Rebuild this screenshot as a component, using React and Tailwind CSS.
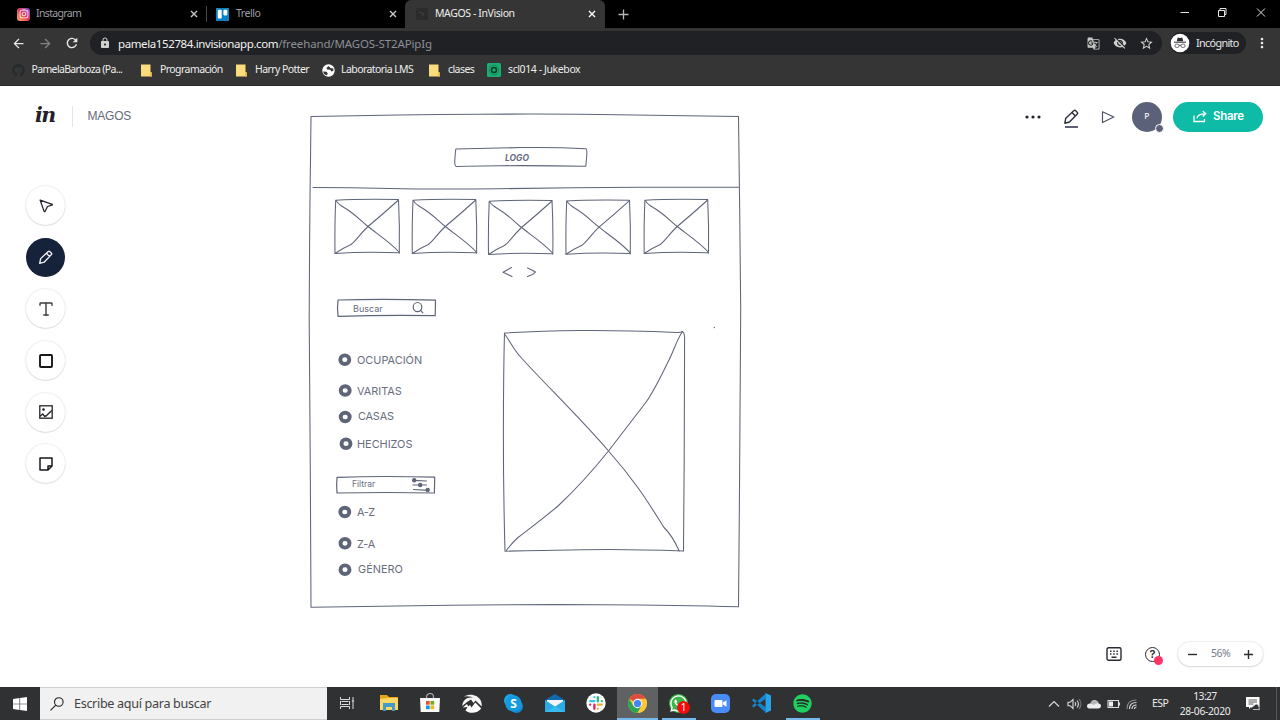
import React from "react";
import { Type } from "lucide-react";
import { FaInstagram, FaTrello, FaGithub, FaSpotify, FaWhatsapp } from "react-icons/fa";
import {
  MdArrowBack, MdArrowForward, MdRefresh, MdLock, MdGTranslate,
  MdVisibilityOff, MdStarBorder, MdMoreVert,
} from "react-icons/md";

const INK = "#5f6578";

function Cross({ className }) {
  return (
    <svg className={className} viewBox="0 0 8 8" width="8" height="8" stroke="currentColor" strokeWidth="1.4">
      <path d="M1 1l6 6M7 1L1 7" />
    </svg>
  );
}

function TabStrip() {
  return (
    <div className="flex h-7 bg-black text-[10.5px] text-[#9b9fa3]">
      <div className="flex w-[206px] items-center pl-[17px] pr-[8px]">
        <span className="flex size-[13px] items-center justify-center rounded-[3px] bg-linear-to-tr from-[#fdb04a] via-[#e0365f] to-[#7b35d0] text-white">
          <FaInstagram size={10} />
        </span>
        <span className="ml-[6px] flex-1 tracking-[-0.65px]">Instagram</span>
        <Cross className="text-[#c9cbcd]" />
      </div>
      <div className="my-[6px] w-px bg-[#4a4a4a]" />
      <div className="flex w-[198px] items-center pl-[9px] pr-[8px]">
        <span className="flex size-[13px] items-center justify-center overflow-hidden rounded-[2px] bg-white text-[#0a80c4]">
          <FaTrello size={15} />
        </span>
        <span className="ml-[7px] flex-1 tracking-[-0.45px]">Trello</span>
        <Cross className="text-[#c9cbcd]" />
      </div>
      <div className="flex w-[200px] items-center rounded-t-[6px] bg-[#353535] pl-[11px] pr-[9px] text-[#eeeeee]">
        <svg width="12" height="12" viewBox="0 0 12 12">
          <rect width="12" height="12" rx="1" fill="#2b2b2b" />
          <path d="M3 4l3 1 2 1-2 2" stroke="#424242" fill="none" />
        </svg>
        <span className="ml-[7px] flex-1 tracking-[-0.4px]">MAGOS - InVision</span>
        <Cross className="text-white" />
      </div>
      <svg className="ml-[13px] mt-[9px]" width="11" height="11" viewBox="0 0 11 11" stroke="#b6b6b6" strokeWidth="1.3">
        <path d="M5.500 .5v10M.5 5.500h10" />
      </svg>
      <svg className="ml-auto mr-[14px] mt-[7px]" width="86" height="12" viewBox="0 0 86 12" fill="none" stroke="#e4e4e4" strokeWidth="1">
        <path d="M.5 5.500h8.500M38.500 3.500h6v6h-6zM40 3V1.500h6v6H45M77 1.500l8 8M85 1.500l-8 8" />
      </svg>
    </div>
  );
}

function Toolbar() {
  return (
    <div className="flex h-[30px] items-center bg-[#353535] pl-[11px]">
      <MdArrowBack size={15} className="text-[#e8e8e8]" />
      <MdArrowForward size={15} className="ml-[12px] text-[#858585]" />
      <MdRefresh size={16} className="ml-[11px] text-[#e8e8e8]" />
      <div className="ml-[10px] flex h-6 w-[1072px] items-center rounded-full bg-[#202124] pl-[9px] pr-[8px] text-[11.500px]">
        <MdLock size={12} className="text-[#d0d0d0]" />
        <span className="ml-[7px] pt-px tracking-[-0.39px] text-[#f2f2f2]">pamela152784.invisionapp.com</span>
        <span className="flex-1 pt-px tracking-[-0.14px] text-[#8b8f94]">/freehand/MAGOS-ST2APipIg</span>
        <MdGTranslate size={13} className="text-[#c6c6c6]" />
        <MdVisibilityOff size={14} className="ml-[13px] text-[#d0d0d0]" />
        <MdStarBorder size={15} className="ml-[12px] text-[#d6d6d6]" />
      </div>
      <div className="ml-[8px] flex h-[22px] w-[76px] items-center rounded-full bg-[#202124] text-[10.800px] text-[#e8e8e8]">
        <svg width="20" height="20" viewBox="0 0 20 20">
          <circle cx="10" cy="10" r="9.300" fill="#fff" />
          <path d="M6.800 8.300l.9-3.800 2.300.5 2.300-.5.9 3.800z" fill="#292b2e" />
          <path d="M4 9.200h12" stroke="#292b2e" strokeWidth="1" />
          <g fill="none" stroke="#44474a" strokeWidth=".8">
            <rect x="5" y="11.200" width="4" height="3.200" rx="1.300" />
            <rect x="11" y="11.200" width="4" height="3.200" rx="1.300" />
            <path d="M9 12.300h2" />
          </g>
        </svg>
        <span className="ml-[6px] tracking-[-0.65px]">Incógnito</span>
      </div>
      <MdMoreVert size={16} className="ml-[8px] text-[#ececec]" />
    </div>
  );
}

function Note() {
  return (
    <svg width="11" height="13" viewBox="0 0 11 13">
      <path d="M0 .5h9.500V8l1.300.4V12.500H0z" fill="#fbdc7c" />
      <path d="M9 8.500h1.800v4H9z" fill="#e3b94f" />
    </svg>
  );
}

function Bookmarks() {
  return (
    <div className="flex h-7 items-center border-b border-[#292929] bg-[#353535] pb-[3px] pl-[12px] text-[10.500px] tracking-[-0.570px] text-[#ededed]">
      <div className="flex w-[129px] items-center gap-[6.500px]">
        <FaGithub size={13} className="text-[#242a2d]" />
        <span className="tracking-[-0.650px]">PamelaBarboza (Pa...</span>
      </div>
      <div className="flex w-[95px] items-center gap-[8px]"><Note /><span>Programación</span></div>
      <div className="flex w-[86px] items-center gap-[8px]"><Note /><span>Harry Potter</span></div>
      <div className="flex w-[107px] items-center gap-[6px]">
        <svg width="13" height="13" viewBox="0 0 13 13">
          <circle cx="6.500" cy="6.500" r="6.200" fill="#fff" />
          <path d="M1 7.500l3.500.3 1.200 1.400L5 11.500 2 10zM6.500 2L4.500 4l.7 1.500 3 .3 1.300 1.700 2-.8-.3-2.200L8.500 4z" fill="#35383b" />
        </svg>
        <span>Laboratoria LMS</span>
      </div>
      <div className="flex w-[58px] items-center gap-[8px]"><Note /><span>clases</span></div>
      <div className="flex items-center gap-[7px]">
        <svg width="14" height="14" viewBox="0 0 14 14">
          <rect width="14" height="14" rx="1.500" fill="#1aad71" />
          <circle cx="7" cy="7" r="4.800" fill="none" stroke="#178857" strokeWidth="1" />
          <circle cx="7" cy="7" r="2.500" fill="none" stroke="#10382b" strokeWidth="1.500" />
        </svg>
        <span className="tracking-[-0.400px]">scl014 - Jukebox</span>
      </div>
    </div>
  );
}

function Pencil({ size, color }) {
  return (
    <svg width={size} height={size} viewBox="0 0 16 16" fill="none" stroke={color} strokeWidth="1.400" strokeLinejoin="round">
      <path d="M1.800 14.200l1-5L11 1.500q.8-.6 1.500.1l1.800 1.800q.7.800 0 1.500L6.500 13zM9 3.500l3.400 3.500" />
    </svg>
  );
}

function AppHeader() {
  return (
    <div className="flex h-[61px] items-center pl-[35px] pr-[17px]">
      <span className="w-[37px] pb-[3px] font-['DejaVu_Serif',serif] text-[20.500px] font-bold italic leading-none tracking-[-1.500px] text-[#1f2127]">in</span>
      <div className="h-[21px] w-px bg-[#e4e5e8]" />
      <span className="ml-[14.500px] flex-1 pb-px font-['Liberation_Sans',sans-serif] text-[12px] tracking-[-0.2px] text-[#656b7a]">MAGOS</span>
      <svg width="16" height="4" viewBox="0 0 16 4" fill="#23262f">
        <circle cx="2" cy="2" r="1.600" /><circle cx="8" cy="2" r="1.600" /><circle cx="14" cy="2" r="1.600" />
      </svg>
      <div className="ml-[22px] mt-[4px] flex w-[16px] flex-col items-center gap-[1px]">
        <Pencil size={16} color="#2c2f3a" />
        <div className="h-[2px] w-[13px] bg-[#5d6375]" />
      </div>
      <svg className="ml-[22px]" width="14" height="14" viewBox="0 0 14 14" fill="none" stroke="#4f5568" strokeWidth="1.200" strokeLinejoin="round">
        <path d="M1.500 1.800L12.800 7 1.500 12.500z" />
      </svg>
      <div className="relative ml-[17px] flex size-[30px] items-center justify-center rounded-full bg-[#5b6178] font-['Inter',sans-serif] text-[7.500px] font-medium text-white">
        P
        <span className="absolute bottom-[-1px] right-[-1.500px] size-[9px] rounded-full border-[1.500px] border-white bg-[#5b6178]" />
      </div>
      <div className="ml-[11px] flex h-[30px] w-[90px] items-center rounded-full bg-[#0dbba6] pl-[20px] text-white">
        <svg width="14" height="13" viewBox="0 0 14 13" fill="none" stroke="currentColor" strokeWidth="1.300">
          <path d="M1 5.500v6h10.500V9M4 8.300c.3-3.300 2.500-4.500 8.500-4.500M9.700 1l3 2.800-3 2.800" />
        </svg>
        <span className="ml-[6px] font-['Inter',sans-serif] text-[11.500px] font-semibold tracking-[-0.300px]">Share</span>
      </div>
    </div>
  );
}

function Tool({ active, children }) {
  return (
    <div className={active
      ? "flex size-[39px] items-center justify-center rounded-full bg-[#16213a]"
      : "flex size-[39px] items-center justify-center rounded-full bg-white shadow-[0_0_2px_rgba(0,0,0,0.18),0_1px_1px_rgba(0,0,0,0.08)]"}>
      {children}
    </div>
  );
}

function Tools() {
  return (
    <div className="ml-[26px] mt-[39px] flex w-[39px] flex-col gap-[12.700px] self-start">
      <Tool>
        <svg width="14" height="14" viewBox="0 0 14 14" fill="none" stroke="#23262d" strokeWidth="1.300" strokeLinejoin="round">
          <path d="M1.200 1.200l12 4.200q.5.500-.5.800L8.500 7.500 6 12.500q-.7.500-1-.4z" />
        </svg>
      </Tool>
      <Tool active><Pencil size={15} color="#f4f6f8" /></Tool>
      <Tool><Type size={18} strokeWidth={1.900} color="#3a3d42" /></Tool>
      <Tool>
        <svg width="14" height="14" viewBox="0 0 14 14" fill="none" stroke="#15171b" strokeWidth="1.900"><rect x="1" y="1" width="12" height="12" rx="1" /></svg>
      </Tool>
      <Tool>
        <svg width="14" height="14" viewBox="0 0 14 14" fill="none" stroke="#222529" strokeWidth="1.300">
          <rect x=".8" y=".8" width="12.400" height="12.400" />
          <path d="M1 11.300l2.800-2.300 2.400 3.200M5 10.800l2 .2L12.800 5.500" />
          <circle cx="4.500" cy="4.500" r=".7" fill="#222529" />
        </svg>
      </Tool>
      <Tool>
        <svg width="14" height="14" viewBox="0 0 14 14" fill="none" stroke="#15171b" strokeWidth="1.500" strokeLinejoin="round">
          <path d="M1 1h12v8l-4 4H1zM9 13V9h4" />
        </svg>
      </Tool>
    </div>
  );
}

const thumbs = [[0, 0], [77.3, 0], [153.500, 1], [231, 0.700], [309.200, 0]];
const dots = [[344.800, 359.700], [345.200, 390.500], [345.200, 417], [346, 443.700], [344.800, 512], [345, 543.300], [345, 569.700]];

function Sketch() {
  return (
    <svg className="absolute left-0 top-0" width="1280" height="601" viewBox="0 86 1280 601" fill="none" stroke={INK} strokeWidth="1.050" strokeLinecap="round" strokeLinejoin="round">
      <path d="M311 116.500Q400 114.500 480 114.200T600 114.500L738.500 116.500Q739 160 739.700 210T740.700 310Q740.500 400 739.500 490T738.500 606.800Q680 605 600 604.700T450 605.200L311 607.200Q310.600 550 310.300 470T309.200 320Q309.600 220 310.500 160Z" />
      <path d="M313 187.500Q350 187.600 390 188.500T500 188.800Q570 187.300 640 187.200T738.500 187.300" />
      <path d="M455.800 149Q490 148.200 521 147.600T586 148.700Q587.200 149.200 586.700 156T585.800 166.200Q540 165.400 500 165.700T456.600 166.600Q454.400 166.500 454.800 160T455.800 149Z" />
      {thumbs.map(([x, y]) => (
        <g key={x} transform={`translate(${x} ${y})`}>
          <path d="M335.700 200.200Q360 198.800 398.500 199.500Q399.800 225 399.300 253.200M399 252.800Q365 251.500 335 253.500Q334.600 225 335.700 200.200" />
          <path d="M336 200.500Q338 204 344 207.500C355 214 360 220 368 226.500S390 242 399 252" />
          <path d="M398.500 200Q383 214 368 226.500C359 235 357 240 351 244.500Q343 248 335 253.500" />
        </g>
      ))}
      <path d="M511.500 267.500L503 272.300 512 276.500M527.500 268Q532 270 535.500 272 533 275 527.500 276.500" />
      <path d="M338 300Q385 298.700 435.500 300.200L435.200 315.700Q390 314.800 338 316.300Q337 308 338 300Z" strokeWidth="1.200" />
      <ellipse cx="417.500" cy="307.100" rx="4.300" ry="4.600" strokeWidth="1.200" />
      <path d="M420.700 310.300L422.800 312.800" strokeWidth="1.200" />
      <path d="M337 477.300Q385 475.800 434.700 477.200L434.400 493Q390 492 337 493Q336.300 485 337 477.300Z" strokeWidth="1.200" />
      <path d="M413 480.300L426.500 481M413 485H426.500M413.500 489.500L428 490.300" strokeWidth="1.200" />
      <g fill={INK} stroke="none">
        <circle cx="414.200" cy="480.300" r="2.200" /><circle cx="420.200" cy="485" r="2.200" /><circle cx="427.700" cy="490" r="2.200" />
        <circle cx="714.300" cy="327.500" r=".7" />
      </g>
      {dots.map(([x, y]) => <ellipse key={y} cx={x} cy={y} rx="4.500" ry="4.300" strokeWidth="3.900" />)}
      <path d="M504.500 333Q540 331 580 330.600T677 332.500Q681 332.600 682.500 331.500Q684.500 333 684.600 336.500Q684.600 400 684.200 460T683.500 551Q640 549.500 610 549.500T505 551.200Q503.300 490 503.400 430T504.500 333Z" />
      <path d="M504.500 334C510 341 514 350 521 357.500C545 384 583 421 608.500 451C637 483 651 507 664 527.500Q672 535 679.200 551" />
      <path d="M682.500 331.500C677 339 673 353 668 362C660 378 653 393 645 403.500Q627 427 608.500 451C590 474 573 492 558 506C540 521 529 529 518 537.500Q510 545 506.500 550.500" />
    </svg>
  );
}

const labels = [
  ["LOGO", "left-[505px] top-[65.500px] text-[8.500px] font-bold italic"],
  ["Buscar", "left-[353px] top-[215.500px] text-[9px]"],
  ["OCUPACIÓN", "left-[357px] top-[268px] text-[10.900px]"],
  ["VARITAS", "left-[357px] top-[299px] text-[10.900px]"],
  ["CASAS", "left-[358px] top-[324px] text-[10.900px] tracking-[-0.2px]"],
  ["HECHIZOS", "left-[357px] top-[352px] text-[10.900px]"],
  ["Filtrar", "left-[352px] top-[392px] text-[8.500px]"],
  ["A-Z", "left-[357px] top-[420px] text-[10.900px] tracking-[-0.400px]"],
  ["Z-A", "left-[357px] top-[451.500px] text-[10.900px] tracking-[-0.200px]"],
  ["GÉNERO", "left-[358px] top-[477px] text-[10.900px]"],
];

function BottomControls() {
  return (
    <div className="mt-auto flex h-[66px] items-center justify-end pr-[17px]">
      <svg width="16" height="14" viewBox="0 0 16 14" fill="none" stroke="#292b33" strokeWidth="1.400">
        <rect x="1" y=".8" width="14" height="12.400" rx="1.500" />
        <path d="M4 4.200h1.500M7.200 4.200h1.500M10.400 4.200h1.500M4 7h1.500M7.200 7h1.500M10.400 7h1.500M5.500 10.200h5" />
      </svg>
      <div className="relative ml-[23px] flex size-[15px] items-center justify-center rounded-full border-[1.300px] border-[#292b33] font-['Inter',sans-serif] text-[11px] font-semibold leading-none text-[#292b33]">
        ?
        <span className="absolute right-[-4px] top-[8px] size-[9px] rounded-full bg-[#ff3366]" />
      </div>
      <div className="ml-[18px] flex h-[24px] w-[85px] items-center justify-between rounded-full bg-white px-[10px] shadow-[0_0_2px_rgba(0,0,0,0.2),0_1px_2px_rgba(0,0,0,0.1)]">
        <svg width="9" height="9" viewBox="0 0 9 9" stroke="#292b33" strokeWidth="1.400"><path d="M0 4.500h9" /></svg>
        <span className="text-[10.500px] tracking-[-0.500px] text-[#777c8d]">56%</span>
        <svg width="9" height="9" viewBox="0 0 9 9" stroke="#292b33" strokeWidth="1.400"><path d="M0 4.500h9M4.500 0v9" /></svg>
      </div>
    </div>
  );
}

function Freehand() {
  return (
    <div className="relative flex h-[601px] flex-col bg-white">
      <AppHeader />
      <Tools />
      <BottomControls />
      <div className="pointer-events-none absolute inset-0">
        <Sketch />
        {labels.map(([text, cls]) => (
          <span key={text} className={`absolute whitespace-nowrap font-['Inter',sans-serif] leading-[13px] text-[#686e7e] ${cls}`}>{text}</span>
        ))}
      </div>
    </div>
  );
}

function Dock({ children, active, open }) {
  return (
    <div className={active ? "flex h-full w-[41.380px] flex-col items-center bg-[#606163]" : "flex h-full w-[41.380px] flex-col items-center"}>
      <div className="flex flex-1 items-center justify-center pt-px">{children}</div>
      {active && <div className="h-[2px] w-full bg-[#76b9ed]" />}
      {open && <div className="h-[2px] w-[34px] bg-[#76b9ed]" />}
      {!active && !open && <div className="h-[2px]" />}
    </div>
  );
}

function Taskbar() {
  return (
    <div className="flex h-[33px] bg-[#303133]">
      <div className="flex w-10 items-center justify-center">
        <svg width="14" height="14" viewBox="0 0 14 14" fill="#fff">
          <path d="M0 2l6.500-.9v5.600H0zM7.100 1L14 0v6.700H7.100zM0 7.300h6.500v5.600L0 12zM7.100 7.300H14V14l-6.900-1z" />
        </svg>
      </div>
      <div className="flex w-[287px] items-center border-y border-[#cfcfcf] bg-[#f1f1f1] pl-[10px] text-[12.600px] text-[#424242]">
        <svg width="14" height="14" viewBox="0 0 14 14" fill="none" stroke="#222" strokeWidth="1.100"><circle cx="8.800" cy="5" r="4.300" /><path d="M5.800 8.200L.5 13.400" /></svg>
        <span className="ml-[10px] pt-px tracking-[-0.320px]">Escribe aquí para buscar</span>
      </div>
      <Dock>
        <svg width="15" height="14" viewBox="0 0 15 14" fill="none" stroke="#ddd" strokeWidth="1"><path d="M.5 1v2.500h9V1M.5 13v-2.500h9V13M1.500 5.500h7M1.500 8.500h7M.5 5v4M9.500 5v4M13 1v12M11.800 5h2.400" /></svg>
      </Dock>
      <Dock>
        <svg width="18" height="16" viewBox="0 0 18 16"><path d="M0 0h7l2 2h9v13H0z" fill="#e6a51c" /><path d="M0 4l8-1h10v12H0z" fill="#fbd866" /><path d="M3 8h12v8h-3v-4H6v4H3z" fill="#439bc7" /></svg>
      </Dock>
      <Dock>
        <svg width="20" height="20" viewBox="0 0 20 20"><path d="M6.500 6V4a3.500 3.500 0 017 0v2" fill="none" stroke="#aaa" strokeWidth="1.200" /><path d="M0 5h20l-.7 14H.7z" fill="#fafafa" /><path d="M6 8h3.700v3.700H6z" fill="#e95425" /><path d="M10.500 8h3.700v3.700h-3.700z" fill="#6fac20" /><path d="M6 12.500h3.700v3.700H6z" fill="#1698df" /><path d="M10.500 12.500h3.700v3.700h-3.700z" fill="#f4b517" /></svg>
      </Dock>
      <Dock>
        <svg width="20" height="19" viewBox="0 0 20 19">
          <path d="M2 2.500C8-1 16 .5 19 7q1 3 .8 5.500L13.500 6.500 11.500 9 9 5.500 5 8 .3 12Q.2 7.500 4.500 4.500 9 2.500 12.500 4.500 8 1.500 2 2.500z" fill="#f5f5f5" />
          <path d="M.8 13.500L5 10l1.200 2.500L8 11l1.500 2.500 3.800-5 5.900 6C16 19 8 20.500 3.500 16.500L5.500 13z" fill="#fff" />
        </svg>
      </Dock>
      <Dock>
        <svg width="19" height="19" viewBox="0 0 19 19"><circle cx="6.500" cy="6.500" r="6.500" fill="#1ba8e8" /><circle cx="12.500" cy="12.500" r="6.500" fill="#118bd2" /><circle cx="9.500" cy="9.500" r="8.200" fill="#149bdf" /><text x="9.500" y="13.700" textAnchor="middle" fontFamily="Open Sans" fontSize="12" fontWeight="700" fill="#fff">S</text></svg>
      </Dock>
      <Dock>
        <svg width="20" height="18" viewBox="0 0 20 18"><path d="M0 6l10-6 10 6v12H0z" fill="#1268af" /><path d="M2 6h16v7H2z" fill="#f2f5f7" /><path d="M0 6l10 6.500L20 6v12H0z" fill="#2bace6" /><path d="M2 6h16l-8 6z" fill="#f2f5f7" /><path d="M0 18l10-5.500L20 18z" fill="#38bbef" /></svg>
      </Dock>
      <Dock>
        <svg width="20" height="20" viewBox="0 0 20 20">
          <circle cx="10" cy="10" r="9.700" fill="#fff" />
          <g strokeWidth="2.300" strokeLinecap="round">
            <path d="M8.400 4.200h.01M4.200 8.200h4.200" stroke="#36c5f0" />
            <path d="M11.800 4.200v4.200M15.800 8.200h.01" stroke="#2eb67d" />
            <path d="M11.800 11.700h4M11.800 15.800h.01" stroke="#ecb22e" />
            <path d="M8.400 11.700v4.100M4.200 11.700h.01" stroke="#e01e5a" />
          </g>
        </svg>
      </Dock>
      <Dock active>
        <svg width="19" height="19" viewBox="0 0 20 20"><circle cx="10" cy="10" r="10" fill="#fcc934" /><path d="M10 10L1.340 5A10 10 0 0118.660 5z" fill="#df4b3d" /><path d="M1.340 5A10 10 0 0010 20l4.300-7.500L10 10 5.700 12.500z" fill="#2da653" /><path d="M10 5h8.660A10 10 0 0110 20l4.330-7.500z" fill="#fcc934" /><circle cx="10" cy="10" r="4.900" fill="#f7f7f7" /><circle cx="10" cy="10" r="3.800" fill="#4285f4" /></svg>
      </Dock>
      <Dock open>
        <div className="relative flex size-[19px] items-center justify-center rounded-full bg-[#38b64a] text-white">
          <FaWhatsapp size={19} />
          <span className="absolute left-[8px] top-[7px] flex size-[13px] items-center justify-center rounded-full bg-[#f20d0d] text-[10px] leading-none">1</span>
        </div>
      </Dock>
      <Dock>
        <svg width="19" height="19" viewBox="0 0 19 19"><rect width="19" height="19" rx="5" fill="#4a8cf7" /><rect x="3.500" y="6" width="8" height="7" rx="1" fill="#fff" /><path d="M12 8.500L15.500 6.300v6.400L12 10.500z" fill="#fff" /></svg>
      </Dock>
      <Dock>
        <svg width="20" height="20" viewBox="0 0 20 20"><path d="M14.500 0L20 2.500v15L14.500 20z" fill="#29a2e8" /><path d="M15 5.500V.2L1 12.800l1.500 1.700zM15 14.500v5.300L1 7.200l1.500-1.700z" fill="#1683cb" /></svg>
      </Dock>
      <Dock open>
        <span className="flex size-[19px] items-center justify-center rounded-full bg-[#262b28] text-[#20cf61]"><FaSpotify size={19} /></span>
      </Dock>
      <div className="ml-auto flex items-center pr-[3px] text-[10.500px] text-[#ececec]">
        <svg width="93" height="16" viewBox="0 0 93 16" fill="none" stroke="#dedede" strokeWidth="1.100">
          <path d="M1 10.500L6 5.500l5 5" />
          <path d="M20 6.300h2l3-2.800v9l-3-2.800h-2zM27 6.200q1.500 1.800 0 3.600M29 4.500q3 3.500 0 7" />
          <path d="M31 3q4 5 0 10" stroke="#777" />
          <path d="M42.500 12.500q-3.500 0-3.500-2.600t3.500-2.500Q44 3.300 47 4t3.800 3.500q2.200.3 2.200 2.600t-2.500 2.400z" fill="#eee" stroke="none" />
          <path d="M42 8q2-4.500 5-4t4 3.500q-3.500-1-5 1.500-2-1.500-4-1z" fill="#b5b5b5" stroke="none" />
          <path d="M60 4.500h10.500v7H60zM71.500 6.500v3" /><path d="M61 5.500h4v5h-4z" fill="#eee" stroke="none" />
          <path d="M84 13q0-4 4.500-4M81.500 13q0-6.500 7-6.500M86.500 13q0-2 2-2" /><path d="M79 13q0-9 9.500-9" stroke="#888" />
        </svg>
        <span className="ml-[11px] w-[28px] pt-px tracking-[-0.500px]">ESP</span>
        <div className="flex w-[50px] flex-col items-center text-[10.300px] leading-[15px] tracking-[-0.300px]">
          <span className="tracking-[-0.600px]">13:27</span><span className="whitespace-nowrap">28-06-2020</span>
        </div>
        <svg className="ml-[16px]" width="15" height="15" viewBox="0 0 15 15"><path d="M0 1h13.500v10H5l-2 2v-2H0z" fill="#fff" /><path d="M2.500 4h8.500M2.500 6h8.500M2.500 8h5" stroke="#303133" strokeWidth=".8" /><path d="M5 12l5-4q3 0 3 3.500l.5 2H7" fill="#303133" stroke="#ddd" strokeWidth=".8" /></svg>
        <div className="ml-[15px] h-[33px] w-px bg-[#58595b]" />
      </div>
    </div>
  );
}

export default function App() {
  return (
    <div className="flex h-[720px] w-[1280px] flex-col overflow-hidden bg-white font-['Noto_Sans','Open_Sans',sans-serif]">
      <TabStrip />
      <Toolbar />
      <Bookmarks />
      <Freehand />
      <Taskbar />
    </div>
  );
}
